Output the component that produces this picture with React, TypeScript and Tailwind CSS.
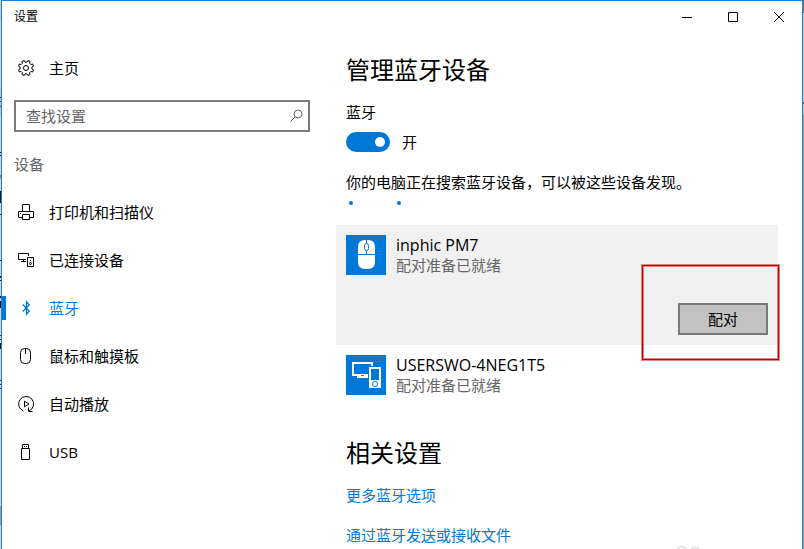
import type { ReactNode } from "react";

const stroke = { fill: "none", stroke: "currentColor", strokeWidth: 1 } as const;

function GearIcon() {
  const points = Array.from({ length: 8 }, (_, i) => i * 45)
    .flatMap((a) =>
      [
        [-13, 6],
        [-9, 7.7],
        [9, 7.7],
        [13, 6],
      ].map(([d, r]) => {
        const t = ((a + d + 22.5) * Math.PI) / 180;
        return `${(8 + r * Math.cos(t)).toFixed(2)},${(8 + r * Math.sin(t)).toFixed(2)}`;
      }),
    )
    .join(" ");
  return (
    <svg width="16" height="16" viewBox="0 0 16 16" {...stroke} strokeLinejoin="round" aria-hidden="true">
      <polygon points={points} />
      <circle cx="8" cy="8" r="2.5" />
    </svg>
  );
}

function PrinterIcon() {
  return (
    <svg width="16" height="16" viewBox="0 0 16 16" {...stroke} aria-hidden="true">
      <path d="M4.5 7V.5h7V7M4.5 13.500h-4v-6h15v6h-4M4.5 10.500h7v5h-7zM2 9.500h1" />
    </svg>
  );
}

function ConnectedIcon() {
  return (
    <svg width="16" height="16" viewBox="0 0 16 16" {...stroke} aria-hidden="true">
      <path d="M8 7.5H.5v-6h10V4M5.5 7.5v2M3 9.5h5M9.5 5.5h6v9h-6z" />
      <circle cx="12.5" cy="11.5" r="1" />
      <path d="M12 8.5h1" />
    </svg>
  );
}

function BluetoothIcon() {
  return (
    <svg width="16" height="16" viewBox="0 0 16 16" {...stroke} strokeWidth={1.3} aria-hidden="true">
      <path d="M4.800 4.500l6.500 6.700-2.800 3v-12.400l2.800 3-6.500 6.700" />
    </svg>
  );
}

function MouseIcon() {
  return (
    <svg width="16" height="16" viewBox="0 0 16 16" {...stroke} aria-hidden="true">
      <rect x="2.5" y=".5" width="10" height="15" rx="4" />
      <path d="M7.5 1v5" />
    </svg>
  );
}

function AutoplayIcon() {
  return (
    <svg width="16" height="16" viewBox="0 0 16 16" {...stroke} aria-hidden="true">
      <path d="M5.5 15A7.500 7.500 0 1 1 11 14.900M10.500 11.500v4h4M6.500 5.200v5.600l4.500-2.800z" />
    </svg>
  );
}

function UsbIcon() {
  return (
    <svg width="16" height="16" viewBox="0 0 16 16" {...stroke} aria-hidden="true">
      <path d="M4.5 4.5v-4h6v4M3.500 4.500h8v11h-8zM6 2.500h1M8 2.500h1" />
    </svg>
  );
}

function SearchIcon() {
  return (
    <svg width="14" height="14" viewBox="0 0 14 14" {...stroke} aria-hidden="true">
      <circle cx="8" cy="5" r="4" />
      <path d="M5 8L.5 12.500" />
    </svg>
  );
}

function MouseTile() {
  return (
    <svg width="40" height="40" viewBox="0 0 40 40" aria-hidden="true">
      <rect width="40" height="40" fill="#0078d7" />
      <path d="M12 19v-7q0-7 7-7h3q7 0 7 7v7zM12 20h17v7q0 7-7 7h-3q-7 0-7-7z" fill="#fff" />
      <path d="M20.500 5v14" stroke="#0078d7" />
      <rect x="18.500" y="8.500" width="4" height="7" rx="2" fill="#fff" stroke="#0078d7" />
    </svg>
  );
}

function ComputerTile() {
  return (
    <svg width="40" height="40" viewBox="0 0 40 40" aria-hidden="true">
      <rect width="40" height="40" fill="#0078d7" />
      <path d="M22 20H7V8h19v3" fill="none" stroke="#fff" strokeWidth="2" />
      <path d="M11 19h11v4H11z" fill="#fff" />
      <path d="M15 20.500h3" stroke="#0078d7" />
      <path d="M23 12h12v21H23z" fill="#fff" />
      <path d="M25 14h8v11h-8z" fill="#0078d7" />
      <circle cx="29" cy="29" r="2.500" fill="#fff" stroke="#0078d7" />
    </svg>
  );
}

/* Slivers of the desktop that show on either side of the window. */
function DesktopEdge({ base, marks }: { base: string; marks: [number, number, string][] }) {
  return (
    <svg width="1" height="549" className="w-px shrink-0" aria-hidden="true">
      <rect width="1" height="549" fill={base} />
      {marks.map(([y, height, fill]) => (
        <rect key={y} y={y} width="1" height={height} fill={fill} />
      ))}
    </svg>
  );
}

const leftMarks: [number, number, string][] = [
  [0, 20, "#c3c9d6"],
  [89, 26, "#b4c6e0"],
  [97, 1, "#333"],
  [101, 1, "#555"],
  [106, 1, "#555"],
  [152, 1, "#111"],
  [155, 1, "#111"],
  [175, 2, "#3f86c8"],
  [177, 2, "#d98a30"],
  [191, 12, "#111"],
  [214, 1, "#222"],
  [260, 1, "#222"],
  [276, 2, "#222"],
  [280, 1, "#222"],
  [296, 2, "#111"],
  [301, 7, "#111"],
  [335, 1, "#333"],
  [339, 1, "#333"],
  [343, 6, "#111"],
  [380, 1, "#333"],
  [384, 1, "#333"],
  [388, 1, "#333"],
  [506, 19, "#9a9da8"],
];

const rightMarks: [number, number, string][] = [
  [0, 13, "#5f7088"],
  [13, 102, "#a9cdec"],
  [102, 2, "#44566c"],
];

function NavItem({ icon, label, active = false }: { icon: ReactNode; label: string; active?: boolean }) {
  return (
    <a
      href="#"
      aria-current={active ? "page" : undefined}
      className={`relative flex h-12 items-center gap-[15px] pl-4 text-[15px] leading-5 ${active ? "text-[#0078d7]" : "text-black"}`}
    >
      {active && <span className="absolute left-0 h-6 w-1 bg-[#0078d7]" />}
      {icon}
      {label}
    </a>
  );
}

function Device({ tile, name }: { tile: ReactNode; name: string }) {
  return (
    <div className="flex gap-2.5 p-2.5">
      {tile}
      <div>
        <p className="text-base leading-5 text-black">{name}</p>
        <p className="text-[15px] leading-5 text-[#666]">配对准备已就绪</p>
      </div>
    </div>
  );
}

export default function App() {
  return (
    <div className="relative flex min-h-screen overflow-hidden bg-[#d3d5dc] font-['Open_Sans','Noto_Sans_CJK_SC',sans-serif] text-black">
      <DesktopEdge base="#d3d5dc" marks={leftMarks} />
      <div className="flex min-w-0 flex-1 flex-col border-x border-t border-[#2080d0] bg-white">
        <header className="flex h-[31px] items-center justify-between pl-3">
          <span className="text-xs leading-4">设置</span>
          <div className="flex h-full">
            <button aria-label="最小化" className="grid w-[46px] place-items-center">
              <svg width="10" height="10" viewBox="0 0 10 10" {...stroke}><path d="M0 5.5h10" /></svg>
            </button>
            <button aria-label="最大化" className="grid w-[46px] place-items-center">
              <svg width="10" height="10" viewBox="0 0 10 10" {...stroke}><path d="M.5.5h9v9h-9z" /></svg>
            </button>
            <button aria-label="关闭" className="grid w-[46px] place-items-center">
              <svg width="10" height="10" viewBox="0 0 10 10" {...stroke}><path d="M0 0l10 10M10 0L0 10" /></svg>
            </button>
          </div>
        </header>
        <div className="flex flex-1 pt-3">
          <nav className="w-80 shrink-0">
            <NavItem icon={<GearIcon />} label="主页" />
            <div className="mx-3 my-2 flex h-8 items-center border-2 border-[#7a7a7a] px-1 text-[#666]">
              <input
                type="search"
                aria-label="查找设置"
                placeholder="查找设置"
                className="min-w-0 flex-1 bg-transparent px-1.5 text-[15px] leading-5 outline-none placeholder:text-[#666]"
              />
              <SearchIcon />
            </div>
            <h2 className="flex h-12 items-center pl-3 text-[15px] leading-5 text-[#666]">设备</h2>
            <NavItem icon={<PrinterIcon />} label="打印机和扫描仪" />
            <NavItem icon={<ConnectedIcon />} label="已连接设备" />
            <NavItem icon={<BluetoothIcon />} label="蓝牙" active />
            <NavItem icon={<MouseIcon />} label="鼠标和触摸板" />
            <NavItem icon={<AutoplayIcon />} label="自动播放" />
            <NavItem icon={<UsbIcon />} label="USB" />
          </nav>
          <main className="min-w-0 flex-1 pr-6 pl-3.5 text-[15px] leading-5">
            <div className="px-2.5">
              <h1 className="pt-2.5 text-2xl leading-8">管理蓝牙设备</h1>
              <label htmlFor="bluetooth" className="mt-4 block">蓝牙</label>
              <div className="mt-2.5 flex items-center gap-3">
                <span className="flex h-5 w-11 items-center rounded-full bg-[#0078d7]">
                  <input
                    id="bluetooth"
                    type="checkbox"
                    role="switch"
                    defaultChecked
                    className="ml-1 size-2.5 appearance-none rounded-full bg-white checked:ml-[29px]"
                  />
                </span>
                开
              </div>
              <p className="mt-5">你的电脑正在搜索蓝牙设备，可以被这些设备发现。</p>
              <div className="mt-[9px] flex gap-11 pl-[3px]">
                <span className="size-1 rounded-full bg-[#0078d7]" />
                <span className="size-1 rounded-full bg-[#0078d7]" />
              </div>
            </div>
            <section className="relative mt-5 bg-[#f1f1f1]">
              <Device tile={<MouseTile />} name="inphic PM7" />
              <div className="flex justify-end px-2.5 pt-[18px] pb-2.5">
                <button className="h-8 w-[90px] border-2 border-[#7a7a7a] bg-[#c2c2c2]">配对</button>
              </div>
              <div className="pointer-events-none absolute top-[39px] -right-0.5 h-[97px] w-[139px] border-3 border-[#e08080]">
                <div className="absolute -inset-0.5 border border-[#c00000]" />
              </div>
            </section>
            <Device tile={<ComputerTile />} name="USERSWO-4NEG1T5" />
            <div className="px-2.5">
              <h2 className="mt-8 text-2xl leading-8">相关设置</h2>
              <a href="#" className="mt-4 block text-[#0078d7]">更多蓝牙选项</a>
              <a href="#" className="mt-5 block text-[#0078d7]">通过蓝牙发送或接收文件</a>
            </div>
          </main>
        </div>
      </div>
      <DesktopEdge base="#86a0c0" marks={rightMarks} />
      <svg width="24" height="4" viewBox="0 0 24 4" className="absolute right-[104px] bottom-0" fill="none" stroke="#ddd" strokeWidth="1.500" aria-hidden="true">
        <path d="M1 4q4.500-5 9 0M15 4q4-3 8 0" />
      </svg>
    </div>
  );
}
